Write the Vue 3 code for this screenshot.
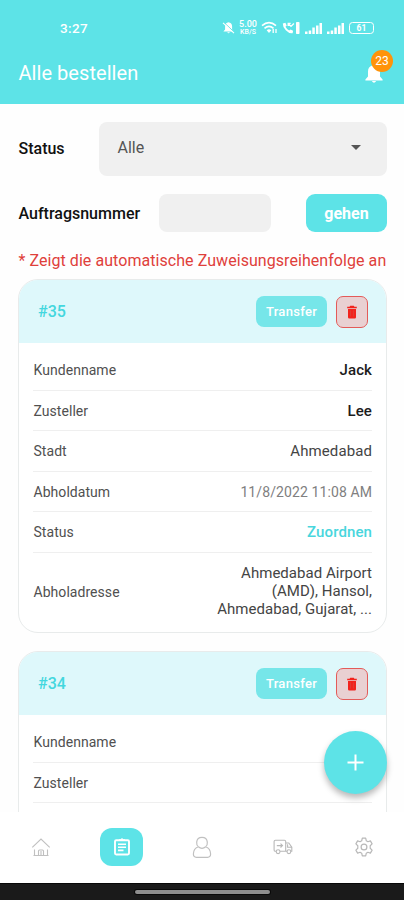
<script setup>
const rows = [
  { label: 'Kundenname', value: 'Jack', kind: 'name' },
  { label: 'Zusteller', value: 'Lee', kind: 'name' },
  { label: 'Stadt', value: 'Ahmedabad', kind: 'city' },
  { label: 'Abholdatum', value: '11/8/2022 11:08 AM', kind: 'date' },
  { label: 'Status', value: 'Zuordnen', kind: 'state' },
  { label: 'Abholadresse', value: 'Ahmedabad Airport\n(AMD), Hansol,\nAhmedabad, Gujarat, ...', kind: 'address' }
]
const orders = [
  { id: '#35', rows },
  { id: '#34', rows: rows.slice(0, 2).map((r) => ({ ...r, value: '' })) }
]
</script>

<template>
  <div class="screen">
    <header class="header">
      <div class="statusbar">
        <span class="time">3:27</span>
        <div class="indicators">
          <svg class="i-mute" width="13" height="14" viewBox="0 0 13 14">
            <path d="M6.500 1.200c2.200.3 3.600 1.800 3.600 4.200v3l1.700 2H1.400l1.700-2v-3c0-2.400 1.300-3.900 3.400-4.200zM5.200 11.200h2.700q-1.300 2-2.700 0z" fill="#fff" />
            <path d="M1.600 1.200l11.200 10.400" stroke="#5de3e7" stroke-width="1" />
            <path d="M1 1.800l11 10.400" stroke="#fff" stroke-width="1.100" />
          </svg>
          <div class="speed"><span>5.00</span><span class="unit">KB/S</span></div>
          <svg class="i-wifi" width="17" height="14" viewBox="0 0 17 14" fill="none" stroke="#fff" stroke-width="1.600">
            <path d="M1 4.600q7-6 14 0M3.500 7.300q4.500-3.900 9 0" />
            <path d="M5.700 9.300q2.300-2 4.600 0L8 12z" fill="#fff" stroke="none" />
            <path d="M12.200 8v4M15 8v4" stroke-width="1.300" />
          </svg>
          <svg class="i-call" width="18" height="14" viewBox="0 0 18 14">
            <path d="M.8 2.500l2.600-.8 1.300 2.800-1.200 1.300q1.300 2.600 3.700 3.700l1.300-1.100 2.600 1.300-.5 2.500Q7.500 13 3.800 9.200.6 6 .8 2.500z" fill="#fff" />
            <path d="M6.300 2.500l2.700 2.900 2.900-2.900M6.200 5V2.300h2.500" fill="none" stroke="#fff" stroke-width="1.300" />
            <rect x="14" y="1" width="3.500" height="12" rx=".7" fill="#fff" />
          </svg>
          <svg v-for="n in 2" :key="n" class="i-signal" width="18" height="13" viewBox="0 0 18 13" fill="#fff">
            <rect x="0" y="9.500" width="2.500" height="2.500" /><rect x="3.700" y="8.500" width="2.500" height="3.500" />
            <rect x="7.300" y="5.500" width="2.500" height="6.500" /><rect x="11" y="3.500" width="2.500" height="8.500" />
            <rect x="14.500" y="1" width="2.500" height="11" />
          </svg>
          <div class="battery"><span>61</span></div>
        </div>
      </div>
      <div class="titlebar">
        <h1>Alle bestellen</h1>
        <div class="bell">
          <svg width="20" height="22" viewBox="0 0 20 22" fill="#fff">
            <path d="M10 1.200c.9 0 1.500.6 1.500 1.500v.5c2.900.8 4.500 3.200 4.500 6.200v5.200l2.600 2.800v1H1.400v-1L4 14.600V9.400c0-3 1.600-5.400 4.500-6.200v-.5c0-.9.6-1.500 1.500-1.500zM7.800 19.100h4.400q-2.200 3.300-4.400 0z" />
          </svg>
          <span class="badge">23</span>
        </div>
      </div>
    </header>

    <main class="content">
      <div class="filter">
        <label class="f-status">Status</label>
        <div class="select"><span>Alle</span><i class="caret"></i></div>
      </div>
      <div class="filter second">
        <label class="f-number">Auftragsnummer</label>
        <div class="input"></div>
        <button class="go"><span>gehen</span></button>
      </div>
      <p class="note">* Zeigt die automatische Zuweisungsreihenfolge an</p>

      <section v-for="order in orders" :key="order.id" class="card">
        <div class="card-head">
          <span class="number">{{ order.id }}</span>
          <button class="transfer">Transfer</button>
          <button class="delete">
            <svg width="12" height="14" viewBox="0 0 12 14" fill="#f2231d">
              <path d="M4.200.8h3.600l.6.900h2.400v1.500H1.200V1.700h2.400zM2 4h8v8.200q0 1.200-1.200 1.200H3.200Q2 13.400 2 12.200z" />
              <path d="M4.600 5.500v6M7.400 5.500v6" stroke="#d9483f" stroke-width=".7" />
            </svg>
          </button>
        </div>
        <div class="rows">
          <div v-for="row in order.rows" :key="row.label" class="row" :class="row.kind">
            <span class="label">{{ row.label }}</span>
            <span class="value">{{ row.value }}</span>
          </div>
        </div>
      </section>

      <button class="fab">
        <svg width="17" height="17" viewBox="0 0 17 17" stroke="#fff" stroke-width="2"><path d="M8.500 .5v16M.5 8.500h16" /></svg>
      </button>
    </main>

    <nav class="nav">
      <div class="tab">
        <svg width="20" height="20" viewBox="0 0 20 20" fill="none" stroke="#c0c0c0" stroke-width="1.100">
          <path d="M1.300 10.300L10 2.100l8.700 8.200M3.500 12.500v6h13v-6M7.500 18.500v-4.500q0-1 1-1h3q1 0 1 1v4.500M10 14v4.500M2.500 18.500h15" />
        </svg>
      </div>
      <div class="tab active">
        <svg width="18" height="20" viewBox="0 0 18 20" fill="none" stroke="#fff">
          <rect x="2" y="3.200" width="14" height="14.300" rx="1.200" stroke-width="1.900" />
          <path d="M5 7.200h8M5 10.300h8M5 13.400h5.500" stroke-width="1.600" />
          <path d="M6 4V2.300h1.600q1.400-2 2.800 0H12V4z" fill="#fff" stroke="none" />
        </svg>
      </div>
      <div class="tab">
        <svg width="20" height="23" viewBox="0 0 20 23" fill="none" stroke="#c0c0c0" stroke-width="1.200">
          <path d="M6.300 10.800C4.800 9.500 4.500 7.900 4.700 6.100 5 3.200 7.200 1.400 10 1.400s5 1.800 5.300 4.700c.2 1.800-.1 3.400-1.600 4.700M6.300 10.800c2.200 1.800 5.200 1.800 7.400 0M6.300 10.800C3.300 12 1.400 14.600 1.400 18.100c0 2 1 3.200 3 3.200h11.200c2 0 3-1.200 3-3.200 0-3.500-1.900-6.100-4.900-7.300" />
        </svg>
      </div>
      <div class="tab">
        <svg width="20" height="16" viewBox="0 0 20 16" fill="none" stroke="#b8b8b8" stroke-width="1.100">
          <path d="M3.200 12.300H2.100q-1-.2-1-1.200V2.600q0-1.300 1.300-1.300h9q1.300 0 1.300 1.300v9.700H7M12.700 4h3.100l3 4.200v4.100h-1.200M12.700 12.300h1.500M14.600 5.200v3h4" />
          <circle cx="5.100" cy="12.700" r="1.900" /><circle cx="15.900" cy="12.700" r="1.900" />
          <path d="M3.800 6.600h5.600M7.500 4.700l2 1.900-2 1.900" />
        </svg>
      </div>
      <div class="tab">
        <svg width="20" height="20" viewBox="0 0 20 20" fill="none" stroke="#b8b8b8" stroke-width="1.200" stroke-linejoin="round">
          <path d="M8.300 1.200h3.400l.6 2.600 1.600.9 2.500-.8 1.700 3-1.900 1.800v2.600l1.900 1.800-1.700 3-2.500-.8-1.600.9-.6 2.600H8.300l-.6-2.600-1.600-.9-2.500.8-1.700-3 1.900-1.800V8.700L1.900 6.900l1.700-3 2.500.8 1.600-.9z" />
          <circle cx="10" cy="10" r="2.900" />
        </svg>
      </div>
    </nav>
    <div class="system"><i></i></div>
  </div>
</template>

<style>
body { background: #fff; }
</style>

<style scoped>
* { box-sizing: border-box; }
.screen {
  width: 404px; height: 900px; overflow: hidden; display: flex; flex-direction: column;
  font-family: Roboto, "Liberation Sans", sans-serif; background: #fefefe; color: #111;
}
button { border: 0; padding: 0; font-family: inherit; display: flex; align-items: center; justify-content: center; }
svg { display: block; flex: none; }
span { white-space: pre; }

.header { height: 103.500px; flex: none; background: #5de3e7; color: #fff; }
.statusbar { height: 46px; padding: 10px 30px 0 60px; display: flex; align-items: center; justify-content: space-between; }
.time { font-size: 13.500px; font-weight: 500; letter-spacing: .4px; }
.indicators { display: flex; align-items: center; }
.speed { width: 18px; margin: 0 4px; display: flex; flex-direction: column; align-items: center; font-size: 9px; line-height: 7.500px; font-weight: 500; }
.unit { font-size: 7px; line-height: 6px; }
.i-call { margin: 0 5px 0 4px; }
.i-signal { margin-right: 4px; }
.battery { width: 25px; height: 12px; border: 1px solid #fff; border-radius: 3.500px; display: flex; align-items: center; justify-content: center; font-size: 8.500px; line-height: 9px; font-weight: 700; }
.titlebar { height: 54px; padding: 0 20px 0 18.500px; display: flex; align-items: center; justify-content: space-between; }
h1 { margin: 0; font-size: 20px; font-weight: 400; letter-spacing: .05px; }
.bell { position: relative; }
.badge { position: absolute; left: 7px; top: -12px; width: 22px; height: 22px; border-radius: 50%; background: #ff930a; display: flex; align-items: center; justify-content: center; font-size: 12px; }

.content { position: relative; height: 708.500px; flex: none; overflow: hidden; padding: 18px 17px 0 18px; }
.filter { display: flex; align-items: center; }
.filter label { font-size: 16px; font-weight: 500; color: #111; flex: none; padding-left: .5px; }
.f-status { width: 81px; }
.f-number { width: 141px; }
.second { margin-top: 18.500px; }
.select { width: 288px; height: 54px; border-radius: 8px; background: #f0f0f0; display: flex; align-items: center; justify-content: space-between; padding: 0 26px 2px 18.500px; font-size: 16px; color: #555; }
.caret { border: 5.500px solid transparent; border-top-color: #555; border-bottom: 0; }
.input { width: 112px; height: 38px; border-radius: 8px; background: #f0f0f0; }
.go { width: 81px; height: 38px; margin-left: 35px; border-radius: 9px; background: #5de3e7; color: #fff; font-size: 16px; font-weight: 700; }
.note { margin: 18.500px 0 0; height: 20px; line-height: 19px; font-size: 16px; letter-spacing: .06px; padding-left: .5px; color: #df403b; white-space: nowrap; }

.card { width: 369px; margin-top: 8.500px; border: 1.500px solid #e8ebeb; border-radius: 20px; overflow: hidden; background: #fff; }
.card + .card { margin-top: 18.500px; min-height: 353px; }
.card-head { height: 63px; padding: 0 18px 0 19px; background: #def8fb; display: flex; align-items: center; }
.number { flex: 1; font-size: 16px; font-weight: 500; color: #43d7de; }
.transfer { width: 71px; height: 31px; border-radius: 8px; background: #76e6e9; color: #fff; font-size: 13px; font-weight: 500; letter-spacing: .3px; }
.delete { width: 32px; height: 32px; margin-left: 9px; border: 1.300px solid #e35b59; border-radius: 7px; background: #e9d0d2; }
.rows { padding: 7px 14px 0 14px; }
.row { height: 40.500px; border-bottom: 1px solid #efefef; display: flex; align-items: center; justify-content: space-between; font-size: 14px; color: #505050; }
.label { padding: 1px 0 0 .5px; letter-spacing: .05px; }
.name .value { font-size: 15px; font-weight: 500; letter-spacing: .1px; color: #1c1c1c; padding-top: 1px; }
.city .value, .address .value { font-size: 15px; color: #444; }
.city .value { letter-spacing: .1px; padding-top: 1px; }
.date .value { color: #808080; letter-spacing: .1px; padding-top: 1px; }
.state .value { font-size: 15px; font-weight: 500; letter-spacing: .1px; color: #48d6dd; padding-top: 1px; }
.address { height: 79px; border: 0; }
.address .label { padding: 0 0 1px .5px; }
.address .value { line-height: 18px; text-align: right; padding-bottom: 1.500px; letter-spacing: .03px; }

.fab { position: absolute; left: 323.500px; top: 627px; width: 63px; height: 63px; border-radius: 50%; background: #5de3e7; box-shadow: 0 4px 6px rgba(0, 0, 0, .28); }
.nav { height: 70.500px; flex: none; padding-left: 1px; background: #fff; display: grid; grid-template-columns: repeat(5, 1fr); align-items: center; justify-items: center; }
.active { width: 43px; height: 38px; border-radius: 12px; background: #5de3e7; display: flex; align-items: center; justify-content: center; }
.system { flex: 1; background: #1a1a1a; border-top: 1.500px solid #080808; display: flex; justify-content: center; align-items: center; }
.system i { width: 135px; height: 4px; border-radius: 2px; background: #8e8e8e; box-shadow: 0 0 0 1px #090909; }
</style>
